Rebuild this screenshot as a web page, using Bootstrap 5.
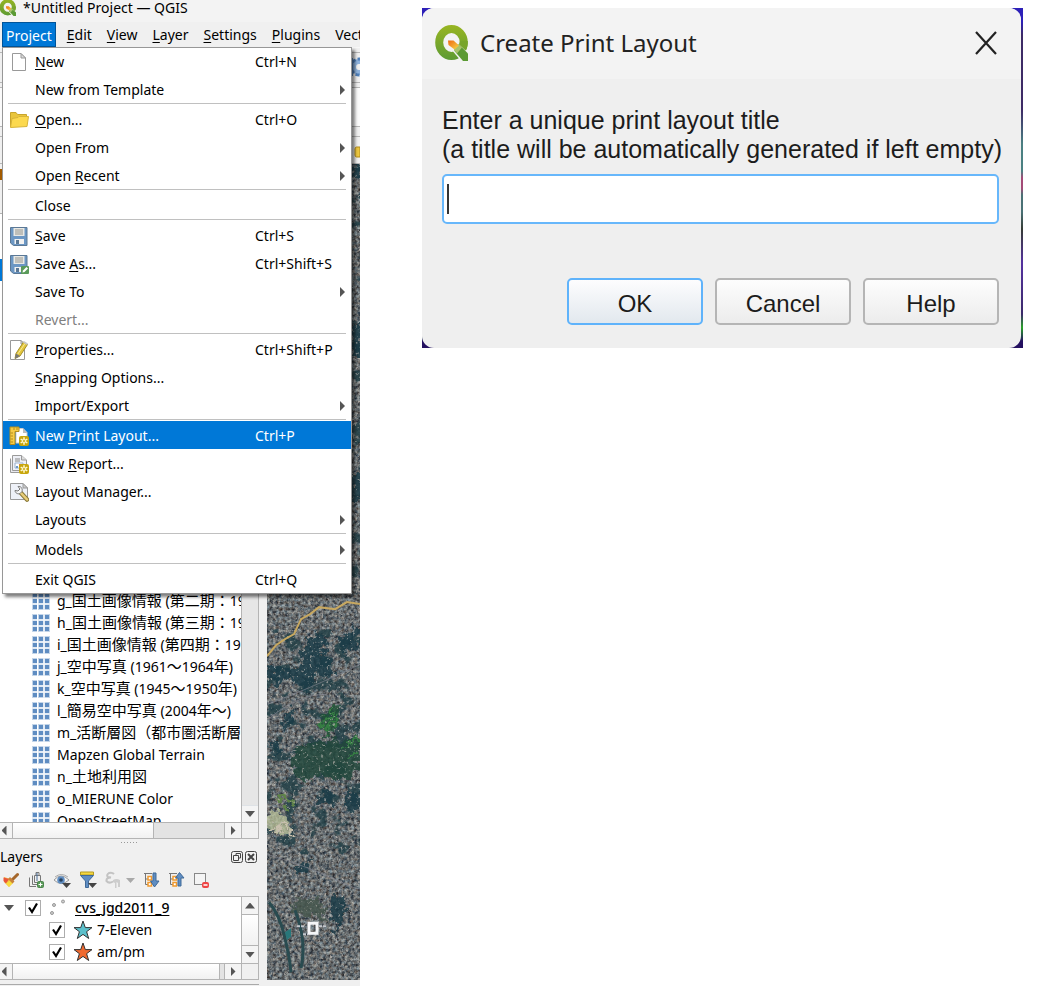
<!DOCTYPE html>
<html lang="en">
<head>
<meta charset="utf-8">
<meta name="viewport" content="width=device-width, initial-scale=1">
<title>QGIS – Create Print Layout</title>
<link href="https://cdn.jsdelivr.net/npm/bootstrap@5.3.0/dist/css/bootstrap.min.css" rel="stylesheet">
<style>
  body { background: #fff; color: #000; font-family: "Noto Sans", "Noto Sans CJK JP", sans-serif; font-size: 14px; line-height: 22px; }
  button { color: inherit; }
  .guide { display: grid; grid-template-columns: minmax(360px, 360fr) 62fr minmax(480px, 601fr) 17fr; min-height: 100vh; }
  .guide > .qgis { grid-column: 1; }
  .guide > .shot { grid-column: 3; margin-top: 8px; }

  /* main window */
  .qgis { background: #f0f0f0; overflow: hidden; height: 100vh; min-height: 900px; }
  .titlebar { height: 22px; background: #f3f3f3; line-height: 16px; gap: 6px; }
  .menubar { height: 25px; padding-left: 2px; background: #f0f0f0; white-space: nowrap; }
  .menubar > button { border: 0; background: none; padding: 2px 0 0 15px; height: 25px; font-size: 14px; }
  .menubar > .open-tab { background: #0078d7; color: #fff; padding: 2px 3px 0; border: 1px solid #005499; width: 54px; }
  .menubar > .open-tab + button { padding-left: 11px; }
  u { text-underline-offset: 2px; }

  .main-menu { top: 47px; left: 2px; right: 8px; z-index: 5; background: #fff; border: 1px solid #979797; border-top: 0;
    box-shadow: inset 0 1px #979797, 3px 3px 3px rgba(0,0,0,.5); }
  .main-menu .dropdown-item { display: grid; grid-template-columns: 27px minmax(0, 1fr) 81px 15px; align-items: center;
    height: 28px; padding: 0 0 0 6px; color: #000; font-size: 14px; line-height: 30px; border-radius: 0; }
  .main-menu .dropdown-item > svg { grid-column: 1; }
  .main-menu .dropdown-item > .cap { grid-column: 2; align-self: start; margin-left: -1px; }
  .main-menu .dropdown-item > .key { grid-column: 3; align-self: start; }
  .main-menu .dropdown-item > .sub { grid-column: 4; width: 5px; height: 10px; margin-left: 4px; background: #555; clip-path: polygon(0 0, 100% 50%, 0 100%); }
  .main-menu .dropdown-item:disabled { color: #808080; }
  .main-menu .dropdown-item.current { background: #0078d7; color: #fff; }
  .main-menu hr { margin: 0 5px 0; height: 2px; border: 0; opacity: 1; background: linear-gradient(#c0c0c0 50%, #fff 50%); }

  .bars { height: 117px; border-top: 1px solid #f8f8f8; }
  .bars > div { border-bottom: 1px solid #b8b8b8; }
  .bars > .plain { background: #fbfbfb; height: 39px; }
  .bars > .cogs { height: 30px; }
  .bars > .slim { height: 10px; }
  .dock { width: 259px; flex: none; margin-right: 8px; }
  .pane { background: #fff; border-right: 1px solid #b4b4b4; overflow: hidden; }
  .rows { overflow: hidden; white-space: nowrap; flex: 1; min-width: 0; }
  .behind-title { height: 50px; border-bottom: 1px solid #b4b4b4; background: linear-gradient(#f0f0f0 5px, #a35b00 5px 16px, #f0f0f0 16px); }
  .chosen { margin-top: 45px; height: 22px; background: #0078d7; }
  .listing { margin: 309px 0 0; padding: 0 0 0 32px; }
  .listing li { height: 22px; gap: 7px; }
  .listing svg { flex: none; }
  .listing span[lang] { font-size: 15px; }

  .vbar { width: 17px; background: #e6e6e6; border-left: 1px solid #b4b4b4; }
  .hbar { height: 17px; background: #e3e3e3; border: 1px solid #b4b4b4; border-left: 0; }
  .arr { border: 0; padding: 0; display: flex; align-items: center; justify-content: center; background: #f4f4f4; flex: none; }
  .vbar .arr { height: 17px; }
  .hbar .arr { width: 17px; }
  .hbar .arr:first-child { width: 13px; padding-right: 4px; border-right: 1px solid #b4b4b4; }
  .hbar .arr.end { border-left: 1px solid #b4b4b4; }
  .knob { background: linear-gradient(#fff, #f1f1f1); border-right: 1px solid #b4b4b4; }
  .knob.half { flex: 0 0 141px; }
  .knob.tall { border: solid #b4b4b4; border-width: 1px 0; }
  .nook { width: 17px; border-left: 1px solid #b4b4b4; background: #f0f0f0; }
  .tri { width: 10px; height: 6px; background: #555; clip-path: polygon(0 0, 100% 0, 50% 100%); flex: none; }
  .tri.up { clip-path: polygon(50% 0, 100% 100%, 0 100%); }
  .tri.lt { width: 5px; height: 10px; clip-path: polygon(0 50%, 100% 0, 100% 100%); }
  .tri.rt { width: 5px; height: 10px; clip-path: polygon(0 0, 100% 50%, 0 100%); }

  .grip { height: 7px; }
  .grip i { width: 17px; height: 1px; background: repeating-linear-gradient(90deg, #999 0 1px, transparent 1px 3px); }
  .dock-head { height: 22px; padding-right: 2px; gap: 2px; }
  .dock-head button, .tools button { border: 0; padding: 0; background: none; display: flex; }
  .tools { height: 28px; padding: 0 0 4px 2px; gap: 8px; }
  .layers { border-top: 1px solid #b4b4b4; }
  .leaf { height: 22px; padding-left: 4px; }
  .leaf.kid { padding-left: 49px; }
  .leaf .tri + .tick { margin-left: 11px; }
  .tick { appearance: none; width: 16px; height: 16px; border: 1px solid #adadad; background: #fff; margin: 0; flex: none; }
  .tick:checked { background: #fff url("data:image/svg+xml,%3Csvg xmlns='http://www.w3.org/2000/svg' viewBox='0 0 14 14'%3E%3Cpath d='M3 6.5 6 11 11 2.5' fill='none' stroke='%23000' stroke-width='2.2'/%3E%3C/svg%3E") center/14px no-repeat; }
  .map { flex: 1; min-width: 0; margin-bottom: 6px; background: #59606c; }
  .under { height: 6px; padding-top: 4px; }
  .foot { height: 2px; border-top: 1px solid #aaa; }

  /* print layout dialog */
  .shot { align-self: start; padding-right: 2px; background: linear-gradient(#2d20b8 4%, #3d2b66 8% 30%, #4b8082 40% 48%, #a34a77 50% 53%, #4a7175 55% 60%, #363b35 65%, #5431a0 75%, #3b2a6a 90%, #29a229 94%, #241060 98%); }
  .ask { background: #efefef; border-radius: 12px; }
  .ask-head { height: 71px; padding: 0 23px 2px 13px; background: #f3f3f3; border-radius: 12px 12px 0 0; gap: 11px; font-size: 24px; color: #222; }
  .ask-head button { border: 0; padding: 0; background: none; display: flex; }
  .ask-body { padding: 27px 22px 23px 20px; font-family: "Liberation Sans", sans-serif; font-size: 24px; color: #1c1c1c; }
  .ask-body label { font-size: 25px; line-height: 29px; white-space: nowrap; }
  .ask-body input { height: 50px; margin-top: 10px; border: 2px solid #67b7fb; border-radius: 5px; font-size: 24px;
    background: #fff linear-gradient(#333, #333) 3px center/2px 30px no-repeat; caret-color: transparent; width: 100%; padding: 0 8px; outline: 0; }
  .answers { margin-top: 54px; gap: 12px; }
  .answers button { flex: 0 1 136px; height: 47px; border: 2px solid #b5b5b5; border-radius: 5px; background: linear-gradient(#fdfdfd, #ececec); padding: 4px 0 0; }
  .answers .main-one { border-color: #5fb3fb; background: linear-gradient(#fdfdfe, #e2e8ee); }
</style>
</head>
<body>
<svg width="0" height="0" class="position-absolute" aria-hidden="true">
  <defs>
    <linearGradient id="leaf" gradientUnits="userSpaceOnUse" x1="0" y1="0" x2="0" y2="36"><stop offset="0" stop-color="#98b522"/><stop offset="1" stop-color="#5b9a34"/></linearGradient>
    <linearGradient id="pen" x1="0" y1="0" x2="1" y2="1"><stop offset="0" stop-color="#ee6a13"/><stop offset=".45" stop-color="#f39a2a"/><stop offset="1" stop-color="#f4e04a"/></linearGradient>
    <symbol id="qlogo" viewBox="0 0 34 36">
      <ellipse cx="16.500" cy="17.500" rx="12.300" ry="13.500" fill="none" stroke="url(#leaf)" stroke-width="8"/>
      <path d="M15 15H21L34 28.500V37H27L15 23Z" fill="#f3f3f3"/>
      <path d="M32.800 16C33 20 32 23 30.500 25.500L24 19.500 25 16Z" fill="#78a52b"/>
      <path d="M19 20.500 24 19.500 33 28.500V36H28L19.500 26Z" fill="#5b9a34"/>
      <path d="M19 20.500 24 19.500 27 22.500 22 28.500 19 25Z" fill="#a9c36c"/>
      <path d="M13 15.500H18.500L24 20.500 19.500 24.500 13.500 20Z" fill="url(#pen)"/>
    </symbol>
    <symbol id="tiles" viewBox="0 0 18 18"><path fill="#c3d5e9" d="M0 0h18v18H0z"/><path d="M1 1h4v4H1zM7 1h4v4H7zM13 1h4v4h-4zM1 7h4v4H1zM7 7h4v4H7zM13 7h4v4h-4zM1 13h4v4H1zM7 13h4v4H7zM13 13h4v4h-4z" fill="#5f8dc2"/><path d="M5.500 0v18M12 0v18M0 6h18M0 12h18" stroke="#fff"/></symbol>
    <symbol id="disk" viewBox="0 0 20 20"><path d="M2 1.500H18V19.500H4.500L1.500 17V1.500Z" fill="#6c97c4" stroke="#5b7895"/><path d="M4.500 2h11v8h-11z" fill="#e8e8e4"/><path d="M6 4h8M6 6h8M6 8h8" stroke="#96968f"/><path d="M5.500 13H15v5H5.500z" fill="#f2f2f2"/><path d="M7 14h3v4H7z" fill="#5b7895"/></symbol>
    <symbol id="spark" viewBox="0 0 10 10"><rect width="10" height="10" rx="2" fill="#c8a60c"/><path d="M5 1.200V8.800M1.700 3.100 8.300 6.900M8.300 3.100 1.700 6.900" stroke="#fff8d0" stroke-width="1.500"/><circle cx="5" cy="5" r="1" fill="#c8a60c"/></symbol>
    <symbol id="star" viewBox="0 0 20 20"><path d="M10 1 12.300 7.600H19L13.600 11.700 15.700 18.500 10 14.400 4.300 18.500 6.400 11.700 1 7.600H7.700Z" stroke="#333" stroke-width="1"/></symbol>
  </defs>
</svg>

<main class="guide">
  <section class="qgis d-flex flex-column position-relative" aria-label="QGIS main window">
    <header class="titlebar d-flex align-items-start">
      <svg width="17" height="16" viewBox="1 2 34 34" preserveAspectRatio="none"><use href="#qlogo" width="34" height="36"/></svg>
      <span>*Untitled Project — QGIS</span>
    </header>
    <nav class="menubar d-flex" aria-label="Menu bar">
      <button class="open-tab">Pro<u>j</u>ect</button>
      <button><u>E</u>dit</button>
      <button><u>V</u>iew</button>
      <button><u>L</u>ayer</button>
      <button><u>S</u>ettings</button>
      <button><u>P</u>lugins</button>
      <button>Vect</button>
    </nav>

    <div class="main-menu position-absolute" role="menu">
      <button class="dropdown-item" role="menuitem">
        <svg width="20" height="20" viewBox="0 0 20 20"><path d="M3.500 1.500H12L16.500 6V18.500H3.500Z" fill="#fff" stroke="#999"/><path d="M12 1.500V6H16.500Z" fill="#ddd" stroke="#999"/></svg>
        <span class="cap"><u>N</u>ew</span><span class="key">Ctrl+N</span></button>
      <button class="dropdown-item" role="menuitem"><span class="cap">New from Template</span><i class="sub"></i></button>
      <hr>
      <button class="dropdown-item" role="menuitem">
        <svg width="20" height="20" viewBox="0 0 20 20"><path d="M1.500 17V2.500H7L8.500 4.500H17.500V7" fill="#e9c53c" stroke="#c9a52c"/><path d="M1.500 17.500 3 8.500 9 7.500 10 6.500H19.500L18 16.500Z" fill="#fcd94f" stroke="#d8b43a"/></svg>
        <span class="cap"><u>O</u>pen...</span><span class="key">Ctrl+O</span></button>
      <button class="dropdown-item" role="menuitem"><span class="cap">Open From</span><i class="sub"></i></button>
      <button class="dropdown-item" role="menuitem"><span class="cap">Open <u>R</u>ecent</span><i class="sub"></i></button>
      <hr>
      <button class="dropdown-item" role="menuitem"><span class="cap">Close</span></button>
      <hr>
      <button class="dropdown-item" role="menuitem"><svg width="20" height="20"><use href="#disk"/></svg>
        <span class="cap"><u>S</u>ave</span><span class="key">Ctrl+S</span></button>
      <button class="dropdown-item" role="menuitem"><svg width="20" height="20" viewBox="0 0 20 20"><use href="#disk"/><rect x="12" y="12" width="8" height="8" rx="1" fill="#5a9a5a"/><path d="M13.500 18.500 14 16.500 17.500 13 19 14.500 15.500 18Z" fill="#fff"/></svg>
        <span class="cap">Save <u>A</u>s...</span><span class="key">Ctrl+Shift+S</span></button>
      <button class="dropdown-item" role="menuitem"><span class="cap">Save To</span><i class="sub"></i></button>
      <button class="dropdown-item" role="menuitem" disabled><span class="cap">Revert...</span></button>
      <hr>
      <button class="dropdown-item" role="menuitem">
        <svg width="20" height="20" viewBox="0 0 20 20"><path d="M1.500 .500H12L15.500 4V19.500H1.500Z" fill="#fff" stroke="#999"/><path d="M12 .500V4H15.500Z" fill="#ddd" stroke="#999"/><path d="M6 18.500 7 13.500 14.500 2 18.500 4.500 11 16Z" fill="#e3c63c" stroke="#a58f2b"/><path d="M8.500 14.500 16 3.500" stroke="#f7ea9a"/><path d="M14 2.500 15 1 19 3.500 18 5Z" fill="#c9c9c9"/><path d="M6 18.800 7 13.500 11 16Z" fill="#777"/></svg>
        <span class="cap"><u>P</u>roperties...</span><span class="key">Ctrl+Shift+P</span></button>
      <button class="dropdown-item" role="menuitem"><span class="cap"><u>S</u>napping Options...</span></button>
      <button class="dropdown-item" role="menuitem"><span class="cap">Import/Export</span><i class="sub"></i></button>
      <hr>
      <button class="dropdown-item current" role="menuitem">
        <svg width="20" height="20" viewBox="0 0 20 20"><path d="M7 2.500H14L18 6.500V17H7Z" fill="#fff" stroke="#ccc"/><path d="M14 2V7H18Z" fill="#bbb"/><path d="M1 1H10V5.500H6V18.500H1Z" fill="#f5cb47" stroke="#b38d1d"/><path d="M1.500 7H4M1.500 10H4M1.500 13H4M1.500 16H4M5 1.500V4M8 1.500V4" stroke="#b38d1d"/><use href="#spark" x="10" y="10" width="10" height="10"/></svg>
        <span class="cap">New <u>P</u>rint Layout...</span><span class="key">Ctrl+P</span></button>
      <button class="dropdown-item" role="menuitem">
        <svg width="20" height="20" viewBox="0 0 20 20"><path d="M1.500 4.500V18.500H12" fill="#e9e9ee" stroke="#9a9a9a"/><path d="M3.500 1.500H12.500L17.500 6V16.500H3.500Z" fill="#eef0f6" stroke="#9a9a9a"/><path d="M12.500 1.500V6H17.500" fill="#ddd" stroke="#9a9a9a"/><path d="M6 5h5M6 7h5" stroke="#888"/><path d="M6 9h8v5H6z" fill="#fff" stroke="#9ab0d0"/><path d="M8 14v-2" stroke="#6c97c4" stroke-width="2"/><path d="M11 14v-4" stroke="#d66" stroke-width="2"/><use href="#spark" x="10" y="10" width="10" height="10"/></svg>
        <span class="cap">New <u>R</u>eport...</span></button>
      <button class="dropdown-item" role="menuitem">
        <svg width="20" height="20" viewBox="0 0 20 20"><path d="M1.500 1.500H14L18.500 6V17.500H1.500Z" fill="#eef1f8" stroke="#9a9a9a"/><path d="M14 1.500V6H18.500Z" fill="#ccc" stroke="#9a9a9a"/><path d="M12 11 18 17.500" stroke="#8a7a3a" stroke-width="4.500" stroke-linecap="round"/><path d="M12 11 18 17.500" stroke="#e8cd78" stroke-width="2.500" stroke-linecap="round"/><path d="M6 8.500C6 11 9 12.500 11 11.500L13 9.500C14 6 11.500 4 9 4.500L11 7 9 9Z" fill="#f6f6f6" stroke="#777"/></svg>
        <span class="cap">Layout Manager...</span></button>
      <button class="dropdown-item" role="menuitem"><span class="cap">Layouts</span><i class="sub"></i></button>
      <hr>
      <button class="dropdown-item" role="menuitem"><span class="cap">Models</span><i class="sub"></i></button>
      <hr>
      <button class="dropdown-item" role="menuitem"><span class="cap">Exit QGIS</span><span class="key">Ctrl+Q</span></button>
    </div>

    <div class="bars d-flex flex-column flex-shrink-0">
      <div class="pt-1"></div>
      <div class="cogs d-flex justify-content-end align-items-center"><svg width="22" height="22" viewBox="0 0 22 22"><circle cx="21" cy="11" r="8" fill="#8fb3dd" stroke="#4f7fb8" stroke-dasharray="4 2" stroke-width="3"/><circle cx="21" cy="11" r="3" fill="#f0f0f0"/><path d="M14 2v18" stroke="#5b8ac2" stroke-width="2"/></svg></div>
      <div class="pt-1"></div>
      <div class="plain"></div>
      <div class="slim"></div>
      <div class="d-flex justify-content-end align-items-end flex-fill"><svg width="6" height="18" viewBox="0 0 6 18"><path d="M6 2H2.500Q1 2 1 4V10Q1 12 2.500 12H6Z" fill="#edc73f" stroke="#b38d1d"/></svg></div>
    </div>

    <div class="d-flex flex-fill overflow-hidden">
      <aside class="dock d-flex flex-column">
        <div class="pane d-flex flex-fill">
          <div class="rows">
            <div class="behind-title"></div>
            <div class="chosen"></div>
            <ul class="listing list-unstyled">
              <li class="d-flex align-items-center"><svg width="18" height="18"><use href="#tiles"/></svg><span>g_<span lang="ja">国土画像情報</span> (<span lang="ja">第二期：</span>19</span></li>
              <li class="d-flex align-items-center"><svg width="18" height="18"><use href="#tiles"/></svg><span>h_<span lang="ja">国土画像情報</span> (<span lang="ja">第三期：</span>19</span></li>
              <li class="d-flex align-items-center"><svg width="18" height="18"><use href="#tiles"/></svg><span>i_<span lang="ja">国土画像情報</span> (<span lang="ja">第四期：</span>19</span></li>
              <li class="d-flex align-items-center"><svg width="18" height="18"><use href="#tiles"/></svg><span>j_<span lang="ja">空中写真</span> (1961<span lang="ja">～</span>1964<span lang="ja">年</span>)</span></li>
              <li class="d-flex align-items-center"><svg width="18" height="18"><use href="#tiles"/></svg><span>k_<span lang="ja">空中写真</span> (1945<span lang="ja">～</span>1950<span lang="ja">年</span>)</span></li>
              <li class="d-flex align-items-center"><svg width="18" height="18"><use href="#tiles"/></svg><span>l_<span lang="ja">簡易空中写真</span> (2004<span lang="ja">年～</span>)</span></li>
              <li class="d-flex align-items-center"><svg width="18" height="18"><use href="#tiles"/></svg><span>m_<span lang="ja">活断層図（都市圏活断層</span></span></li>
              <li class="d-flex align-items-center"><svg width="18" height="18"><use href="#tiles"/></svg><span>Mapzen Global Terrain</span></li>
              <li class="d-flex align-items-center"><svg width="18" height="18"><use href="#tiles"/></svg><span>n_<span lang="ja">土地利用図</span></span></li>
              <li class="d-flex align-items-center"><svg width="18" height="18"><use href="#tiles"/></svg><span>o_MIERUNE Color</span></li>
              <li class="d-flex align-items-center"><svg width="18" height="18"><use href="#tiles"/></svg><span>OpenStreetMap</span></li>
            </ul>
          </div>
          <div class="vbar d-flex flex-column justify-content-end"><button class="arr border-top" aria-label="Scroll down"><i class="tri"></i></button></div>
        </div>
        <div class="hbar d-flex flex-shrink-0">
          <button class="arr" aria-label="Scroll left"><i class="tri lt"></i></button>
          <div class="knob half"></div><div class="flex-fill"></div>
          <button class="arr end" aria-label="Scroll right"><i class="tri rt"></i></button><div class="nook"></div>
        </div>
        <div class="grip d-flex align-items-center justify-content-center flex-shrink-0"><i></i></div>
        <div class="dock-head d-flex align-items-center flex-shrink-0">
          <span class="me-auto">Layers</span>
          <button aria-label="Float panel"><svg width="12" height="12" viewBox="0 0 12 12" fill="none" stroke="#444"><rect x=".500" y=".500" width="11" height="11" rx="2"/><path d="M5 4.500V2.500H9.500V7H7.500M2.500 4.500H7.500V9.500H2.500Z"/></svg></button>
          <button aria-label="Close panel"><svg width="12" height="12" viewBox="0 0 12 12" fill="none" stroke="#444"><rect x=".500" y=".500" width="11" height="11" rx="2"/><path d="M3 3 9 9M9 3 3 9" stroke-width="2"/></svg></button>
        </div>
        <div class="tools d-flex align-items-center flex-shrink-0">
          <button aria-label="Layer styling"><svg width="17" height="18" viewBox="0 0 17 18"><path d="M10 9 15.500 3.500" stroke="#a5672c" stroke-width="3" stroke-linecap="round"/><path d="M2 6 7 7.500 11 11.500 7 16 2 11Z" fill="#f3b348"/><path d="M1.500 6.500 7 8 4 12.500 1.500 10Z" fill="#ea5539"/><path d="M4 12.500 8 9 11 12 7 16Z" fill="#f7dc3e"/><path d="M6 8 8 6 12.500 10.500 10.500 12.500Z" fill="#c9813a"/></svg></button>
          <button aria-label="Add group"><svg width="18" height="18" viewBox="0 0 18 18" fill="none" stroke="#777"><path d="M2.500 6.500V15.500H9M5.500 4.500V13.500H12"/><path d="M7.500 4.500H13.500V11.500H7.500Z"/><path d="M9 4V1.500H12V4"/><path d="M10 2V10" stroke="#4d6f98"/><rect x="10.500" y="10.500" width="6" height="6" rx="1" fill="#5a9a5a" stroke="#4d874d"/><path d="M13.500 11.500v4M11.500 13.500h4" stroke="#fff"/></svg></button>
          <button aria-label="Map themes"><svg width="18" height="18" viewBox="0 0 18 18"><path d="M1 9Q8 1 16 9Q8 16 1 9Z" fill="#f6f6f6" stroke="#999"/><path d="M2 6Q8 1 15 6" fill="none" stroke="#aaa"/><circle cx="8" cy="9" r="3.800" fill="#5f8dc2"/><circle cx="8" cy="9" r="1.800" fill="#26405c"/><path d="M9 12H18L13.500 17Z" fill="#444"/></svg></button>
          <button aria-label="Filter legend"><svg width="18" height="18" viewBox="0 0 18 18"><path d="M1.500 1H14.500V4H1.500Z" fill="#f4d740" stroke="#b49a20"/><path d="M1.500 4.500H14.500L9.500 10V16.500H6.500V10Z" fill="#5f8dc2" stroke="#416a98"/><path d="M9 12H18L13.500 17Z" fill="#444"/></svg></button>
          <button aria-label="Filter by expression" disabled><svg width="30" height="18" viewBox="0 0 30 18"><path d="M9 3Q7 1 4 2Q1 4 3 6L6 6.500Q1 6.500 1.500 10Q4 13 8 10.500" fill="none" stroke="#c3c3c3" stroke-width="2"/><path d="M8 9Q11.500 7 15 9V16H13V12L11.500 11V17H10V12L8 11Z" fill="#cdcdcd"/><path d="M21 7H30L25.500 12Z" fill="#a9a9a9"/></svg></button>
          <button aria-label="Expand all"><svg width="17" height="18" viewBox="0 0 17 18"><path d="M1 2.500H9M2.500 2.500V13.500M2.500 8H5M2.500 13.500H5" fill="none" stroke="#777"/><path d="M5 5.500H8.500V9H5zM5 11.500H8.500V15H5z" fill="#fff" stroke="#f19a2f" stroke-width="1.500"/><path d="M10 2H13V10H16L11.500 16 7.500 10H10Z" fill="#5f8dc2" stroke="#416a98"/></svg></button>
          <button aria-label="Collapse all"><svg width="17" height="18" viewBox="0 0 17 18"><path d="M1 2.500H9M2.500 2.500V13.500M2.500 8H5M2.500 13.500H5" fill="none" stroke="#777"/><path d="M5 5.500H8.500V9H5zM5 11.500H8.500V15H5z" fill="#fff" stroke="#f19a2f" stroke-width="1.500"/><path d="M10 15H13V7H16L11.500 1.500 7.500 7H10Z" fill="#5f8dc2" stroke="#416a98"/></svg></button>
          <button aria-label="Remove layer"><svg width="16" height="18" viewBox="0 0 16 18"><rect x="1.500" y="2.500" width="11" height="11" fill="#f4f4f4" stroke="#888"/><rect x="9" y="11" width="7" height="6" rx="2" fill="#ee4444"/><path d="M10.500 14h4" stroke="#fff" stroke-width="1.500"/></svg></button>
        </div>
        <div class="pane layers d-flex flex-shrink-0">
          <div class="rows">
            <div class="leaf d-flex align-items-center"><i class="tri"></i>
              <input type="checkbox" class="tick" id="cvs" checked>
              <svg class="ms-2" width="18" height="18" viewBox="0 0 18 18" fill="#ccc" stroke="#999"><circle cx="3" cy="14" r="1.500"/><circle cx="5" cy="6" r="1.500"/><circle cx="14" cy="2.500" r="1.500"/></svg>
              <label for="cvs" class="ms-2 fw-medium"><u>cvs_jgd2011_9</u></label></div>
            <div class="leaf kid d-flex align-items-center"><input type="checkbox" class="tick" id="eleven" checked>
              <svg class="ms-2" width="20" height="20" fill="#5cc0cb"><use href="#star"/></svg><label for="eleven" class="ms-1">7-Eleven</label></div>
            <div class="leaf kid d-flex align-items-center"><input type="checkbox" class="tick" id="ampm" checked>
              <svg class="ms-2" width="20" height="20" fill="#f0692f"><use href="#star"/></svg><label for="ampm" class="ms-1">am/pm</label></div>
          </div>
          <div class="vbar d-flex flex-column"><button class="arr" aria-label="Scroll up"><i class="tri up"></i></button>
            <div class="knob tall flex-fill"></div>
            <button class="arr" aria-label="Scroll down"><i class="tri"></i></button></div>
        </div>
        <div class="hbar d-flex flex-shrink-0">
          <button class="arr" aria-label="Scroll left"><i class="tri lt"></i></button>
          <div class="knob flex-fill me-1"></div>
          <button class="arr end" aria-label="Scroll right"><i class="tri rt"></i></button><div class="nook"></div>
        </div>
        <div class="under flex-shrink-0"><div class="foot"></div></div>
      </aside>

      <div class="map">
        <svg class="d-block" width="100%" height="100%" viewBox="0 0 93 816" preserveAspectRatio="xMinYMin slice" role="img" aria-label="Satellite image">
          <defs>
            <filter id="town" x="0" y="0" width="100%" height="100%" color-interpolation-filters="sRGB">
              <feTurbulence type="fractalNoise" baseFrequency=".32" numOctaves="3" seed="4"/>
              <feColorMatrix values=".75 .2 0 0 -.08  .75 .1 .1 0 -.06  .7 0 .15 0 0  0 0 0 0 1"/>
            </filter>
            <filter id="glints" x="0" y="0" width="100%" height="100%" color-interpolation-filters="sRGB">
              <feTurbulence type="fractalNoise" baseFrequency=".35" numOctaves="2" seed="19"/>
              <feColorMatrix values="0 0 0 0 .74  0 0 0 0 .72  0 0 0 0 .7  0 7 0 0 -4.400"/>
            </filter>
            <filter id="woods" x="0" y="0" width="100%" height="100%" color-interpolation-filters="sRGB">
              <feTurbulence type="fractalNoise" baseFrequency=".06 .07" numOctaves="4" seed="11"/>
              <feColorMatrix values="0 0 0 0 .13  0 0 0 0 .25  0 0 0 0 .28  9 0 0 0 -4.900"/>
              <feComposite in2="SourceGraphic" operator="in"/>
            </filter>
            <filter id="rough" x="-20%" y="-20%" width="140%" height="140%">
              <feTurbulence type="fractalNoise" baseFrequency=".14" numOctaves="3" seed="8"/>
              <feDisplacementMap in="SourceGraphic" scale="18" xChannelSelector="R" yChannelSelector="G"/>
            </filter>
          </defs>
          <rect width="93" height="816" fill="#5d6272"/>
          <rect width="93" height="816" filter="url(#town)"/>
          <path d="M0 0H93V430H0ZM0 465H93V690H0Z" filter="url(#woods)" opacity=".8"/>
          <g filter="url(#rough)" fill="#1c3b46" fill-opacity=".82">
            <path d="M84 0H93V16H86ZM84 160H96V195H86ZM84 310H96V335H84Z"/>
            <path d="M34 486 50 468 60 475 56 490 66 500 64 516 50 508 40 526 24 514 8 522 0 510 0 502 20 506 36 498Z"/>
            <path d="M72 475 88 462 93 480 80 490Z"/>
            <path d="M18 550 30 542 24 556 14 570ZM4 575 16 585 8 590Z"/>
            <path d="M52 552 72 540 74 556 60 572Z" fill="#1d5138"/>
            <path d="M28 584 50 578 93 574V606L78 616 52 610 38 618 24 606Z" fill="#1d4639"/>
            <path d="M50 632 62 624 70 636 58 642ZM76 632 93 628V644L82 648Z"/>
            <path d="M30 702 42 694 40 708 30 710Z"/>
            <path d="M64 734 76 728 78 746 70 770 64 752Z"/>
            <path d="M24 738 50 732 62 758 34 750Z" fill="#44564c"/>
          </g>
          <g filter="url(#rough)"><path d="M54 562 66 546M58 568 72 550M78 582 92 576M82 592 92 586" stroke="#347d43" stroke-width="3"/>
            <path d="M2 644 16 650 24 662 14 672 0 664Z" fill="#bfc79c" fill-opacity=".7"/><path d="M0 668 18 662 28 676" fill="none" stroke="#c9c0ae" stroke-width="2"/>
            <path d="M10 632 26 642" stroke="#5e824a" stroke-width="5"/></g>
          <rect width="93" height="816" filter="url(#glints)" opacity=".65"/>
          <path d="M0 492 9 481 18 475 27 470 34 455 43 450 52 443 68 445 80 438 93 440" fill="none" stroke="#c7a860" stroke-width="2"/>
          <path d="M0 540Q40 526 93 500M0 690Q40 702 70 716T93 722M0 556Q30 530 60 530" fill="none" stroke="#858995" opacity=".6"/>
          <path d="M2 738Q12 750 17 770T24 808M28 746Q40 776 34 804" fill="none" stroke="#294b50" stroke-width="3"/>
          <path d="M18 768 24 764 24 772 20 776Z" fill="#28777a"/>
          <path d="M42 759H50V769H42Z" fill="none" stroke="#f4f5f7" stroke-width="3"/>
          <path d="M30 762h8M36 770h5M52 762h8" stroke="#c4c7cd" stroke-width="2" stroke-dasharray="3 1"/>
        </svg>
      </div>
    </div>
  </section>

  <section class="shot" aria-label="Create Print Layout">
    <form class="ask" onsubmit="return false">
      <header class="ask-head d-flex align-items-center">
        <svg width="34" height="36"><use href="#qlogo"/></svg>
        <span class="me-auto">Create Print Layout</span>
        <button type="button" aria-label="Close"><svg width="24" height="26" viewBox="0 0 24 26"><path d="M2 2 22 24M22 2 2 24" stroke="#222" stroke-width="2.200"/></svg></button>
      </header>
      <div class="ask-body">
        <label for="layout-title" class="d-block">Enter a unique print layout title<br>(a title will be automatically generated if left empty)</label>
        <input type="text" id="layout-title">
        <div class="answers d-flex justify-content-end">
          <button class="main-one">OK</button><button type="button">Cancel</button><button type="button">Help</button>
        </div>
      </div>
    </form>
  </section>
</main>
<script src="https://cdn.jsdelivr.net/npm/bootstrap@5.3.0/dist/js/bootstrap.bundle.min.js"></script>
</body>
</html>
